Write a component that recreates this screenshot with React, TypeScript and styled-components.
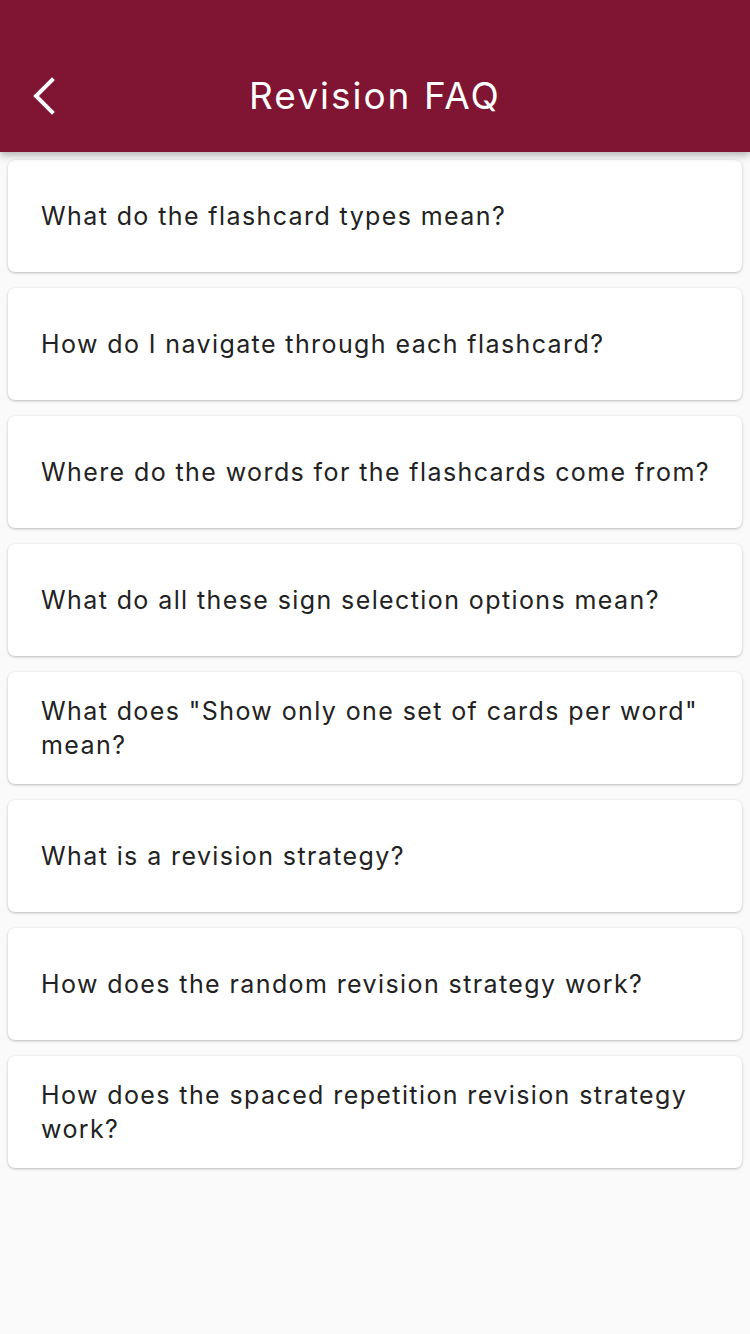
import { createGlobalStyle } from "styled-components";
import styled from "styled-components";

const GlobalStyle = createGlobalStyle`
  html, body {
    margin: 0;
    padding: 0;
    background: #fafafa;
    font-family: Inter, Roboto, "Noto Sans", sans-serif;
  }
`;

const questions: string[] = [
  "What do the flashcard types mean?",
  "How do I navigate through each flashcard?",
  "Where do the words for the flashcards come from?",
  "What do all these sign selection options mean?",
  'What does "Show only one set of cards per word" mean?',
  "What is a revision strategy?",
  "How does the random revision strategy work?",
  "How does the spaced repetition revision strategy work?",
];

const App = () => {
  return (
    <Page>
      <GlobalStyle />
      <Header>
        <BackButton aria-label="Back">
          <svg width="28" height="40" viewBox="0 0 28 40">
            <path d="M22 4 L6 20 L22 36" fill="none" stroke="#fff" strokeWidth="4" strokeLinecap="square" />
          </svg>
        </BackButton>
        <Title>Revision FAQ</Title>
      </Header>
      <List>
        {questions.map((q) => (
          <Card key={q}>
            <Question>{q}</Question>
          </Card>
        ))}
      </List>
    </Page>
  );
};

const Page = styled.div`
  min-height: 1334px;
  background: #fafafa;
`;

const Header = styled.header`
  position: relative;
  height: 152px;
  background: #7f1532;
  display: flex;
  align-items: flex-end;
  justify-content: center;
  padding-bottom: 34px;
  box-sizing: border-box;
  box-shadow: 0 3px 8px rgba(0, 0, 0, 0.3);
  z-index: 1;
`;

const BackButton = styled.button`
  position: absolute;
  left: 30px;
  bottom: 36px;
  background: none;
  border: none;
  padding: 0;
  display: flex;
`;

const Title = styled.h1`
  margin: 0;
  color: #fff;
  font-size: 37px;
  font-weight: 400;
  letter-spacing: 2px;
  line-height: 44px;
`;

const List = styled.div`
  display: flex;
  flex-direction: column;
  gap: 16px;
  padding: 8px 8px;
`;

const Card = styled.div`
  height: 112px;
  box-sizing: border-box;
  background: #fff;
  border-radius: 7px;
  box-shadow: 0 1px 3px rgba(0, 0, 0, 0.25);
  display: flex;
  align-items: center;
  padding: 0 20px 0 33px;
`;

const Question = styled.p`
  margin: 0;
  color: #222;
  font-size: 25px;
  line-height: 34px;
  letter-spacing: 1.4px;
`;

export default App;
